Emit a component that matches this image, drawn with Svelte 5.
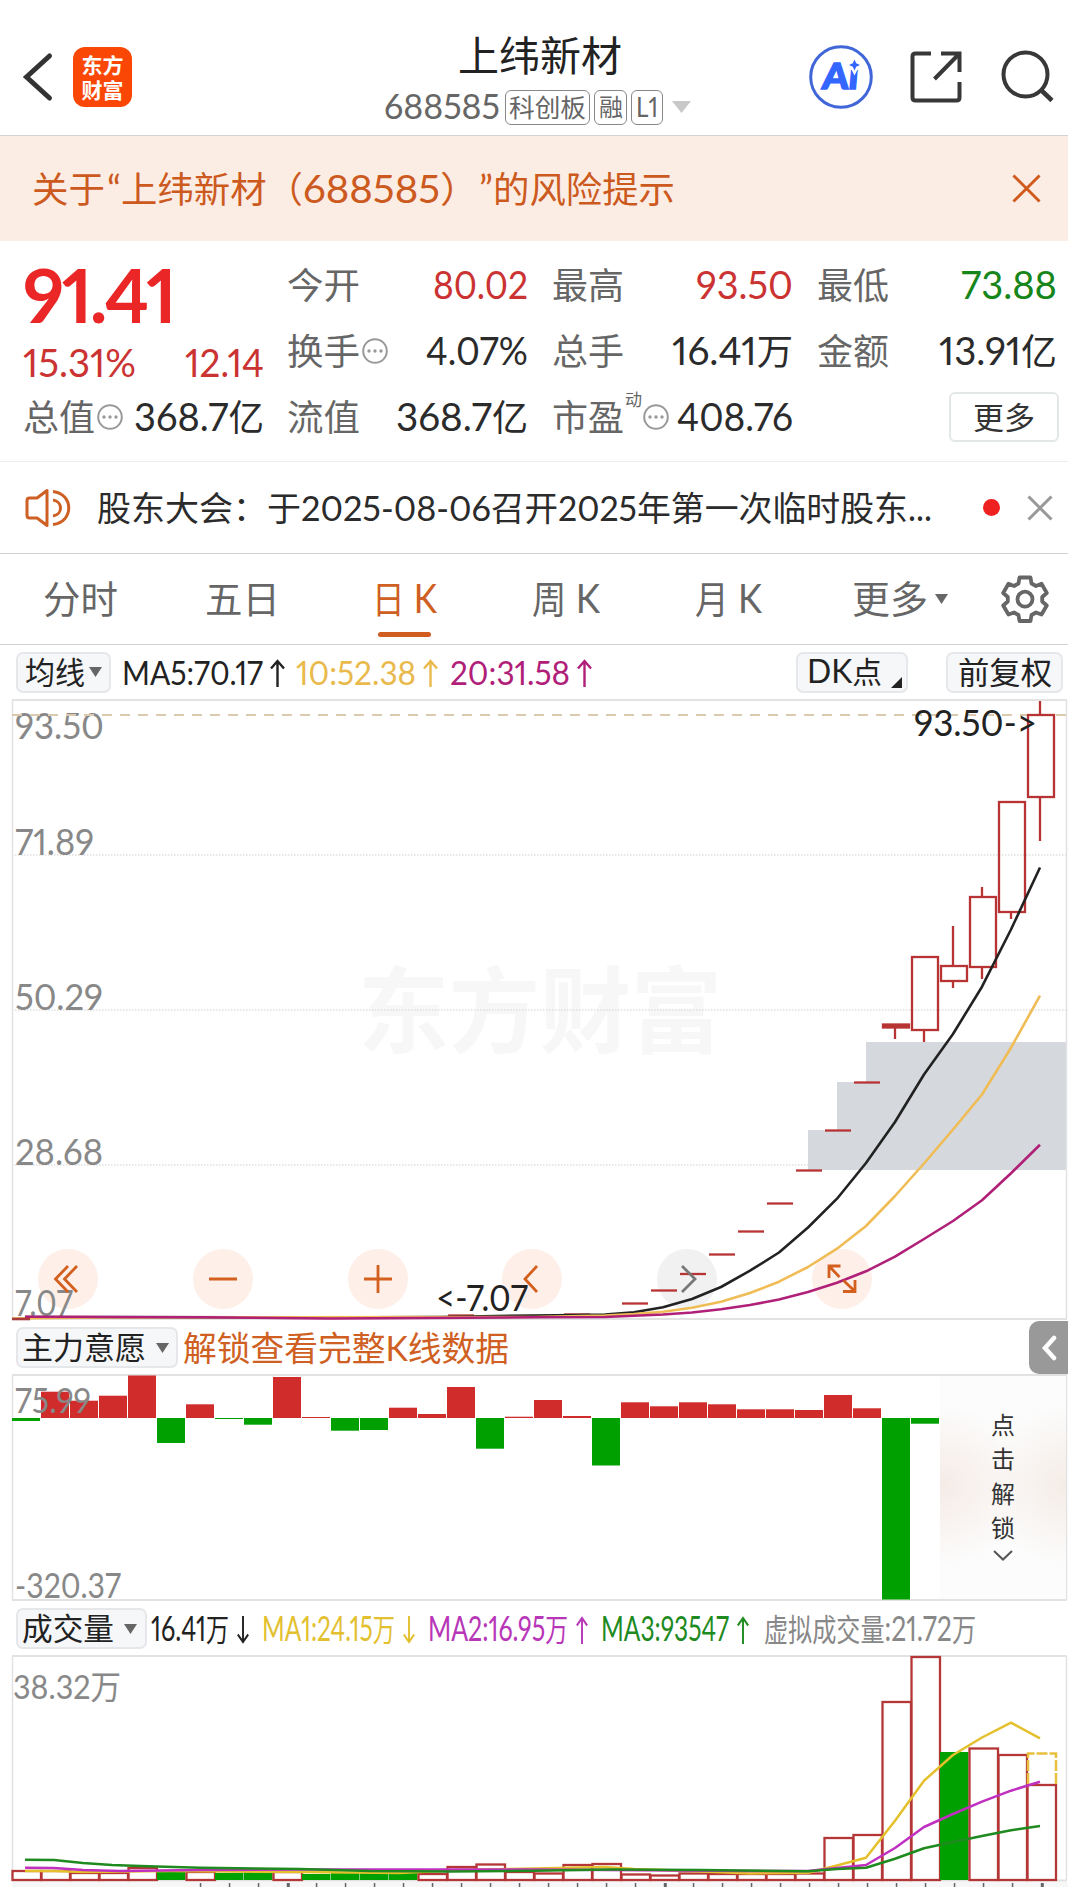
<script>
  // Splits a label into latin and CJK runs so that each gets its own face and size.
  const runs = (s) => s.match(/[\x20-\x7e“”]+|[^\x20-\x7e“”]+/g) ?? [];
  const isLatin = (s) => /^[\x20-\x7e“”]/.test(s);

  const tabs = [
    { t: '分时', w: 75 },
    { t: '五日', w: 75 },
    { t: '日 K', w: 65, on: true },
    { t: '周 K', w: 68 },
    { t: '月 K', w: 67 }
  ];

  // ---- price chart ----
  const cx = (i) => 25 + 29 * i;
  const candles = [
    { i: 30, top: 1024.5, bot: 1027.5, hi: 1024, lo: 1039, solid: true },
    { i: 31, top: 957, bot: 1030, hi: 957, lo: 1042 },
    { i: 32, top: 966, bot: 981, hi: 926, lo: 988 },
    { i: 33, top: 897, bot: 967, hi: 887, lo: 979 },
    { i: 34, top: 802, bot: 912, hi: 802, lo: 919 },
    { i: 35, top: 715, bot: 797, hi: 701, lo: 841 }
  ];
  const dashes = [
    [21, 1303.5], [22, 1290.5], [23, 1274], [24, 1254.5], [25, 1231.5],
    [26, 1203.5], [27, 1170.5], [28, 1130.5], [29, 1082.5], [19, 1314.5], [15, 1315.5]
  ];
  const ma5 = '25,1317 300,1317.5 440,1317 534,1315.5 576,1315 605,1314.5 634,1312.3 663,1307.3 692,1299 721,1287 750,1270.7 779,1252.5 808,1227.5 837,1198.7 866,1163 895,1122 924,1074.5 953,1034 982,986.7 1011,929.5 1040,867.5';
  const ma10 = '12,1318.5 100,1317.5 534,1317 605,1315.5 634,1314 663,1311.7 692,1307.7 721,1301.7 750,1293 779,1281.7 808,1267 837,1248.7 866,1226 895,1196 924,1163.5 953,1129.5 982,1094.5 1011,1047.7 1040,995.7';
  const ma20 = '25,1316.7 200,1317.2 330,1318.5 534,1317.3 605,1317 634,1315.7 663,1314.5 692,1312.5 721,1309.3 750,1305 779,1299.5 808,1292 837,1282.7 866,1271.3 895,1256.7 924,1239 953,1221 982,1200.3 1011,1173.3 1040,1144.7';
  const scale = [
    ['93.50', 15, 738.5, 89], ['71.89', 15, 855, 79], ['50.29', 15, 1010, 88],
    ['28.68', 15, 1164.5, 88], ['7.07', 15, 1316, 58]
  ];

  // ---- main force bars, in pixels above (+) or below (-) zero ----
  const force = [-3, 26.3, 17.3, 22.3, 42.5, -25, 13.7, -1, -6.7, 41, 1, -12.7, -12, 10.3, 4, 31, -30.7, 1.3,
    18, 2, -47.5, 15.7, 11.7, 15.7, 13.7, 8.7, 8.7, 8, 23, 9.7, -181.5, -5.7];

  // ---- volume ----
  const vol = [1871, 1871, 1873, 1873, 1868, 1872, 1872, 1873, 1872, 1872, 1874, 1873, 1873, 1873, 1874, 1867, 1864.5, 1872,
    1873.5, 1865, 1864, 1874.5, 1875.5, 1873.5, 1874, 1874, 1874, 1873.5, 1838, 1835, 1702, 1657, 1752, 1748.5, 1755, 1785];
  const volGreen = [5, 7, 8, 10, 11, 12, 13, 32];
  const v1 = '25,1871 54,1871 83,1872 170,1871 300,1872 400,1873 460,1870 534,1868.5 605,1867 634,1869 692,1871 750,1873.5 808,1872.7 837,1865.5 866,1857.7 895,1820.7 924,1780.7 953,1755 982,1737.5 1011,1722.7 1040,1738.3';
  const v2 = '25,1867.7 54,1868 83,1870 120,1871 200,1870 300,1869.5 534,1869.5 750,1871 808,1871 837,1868 866,1865 895,1848 924,1827 953,1814 982,1801.7 1011,1790.7 1040,1781.7';
  const v3 = '25,1859.7 54,1860 83,1863 112,1865 140,1866 200,1867.7 300,1869 370,1871 450,1871.5 534,1870.7 610,1869.5 700,1870 808,1871.3 837,1869 866,1867.7 895,1858.7 924,1848.3 953,1842 982,1836 1011,1830.3 1040,1826';
  const ticks = Array.from({ length: 30 }, (_, k) => 200.5 + 29 * k);
</script>

{#snippet fit(text, w, size, cls = '', k = 1.07, adjust = 'spacingAndGlyphs')}
  <svg class="fit {cls}" width={w} height={size} viewBox="0 0 {w} {size}">
    <text x="0" y={size * 0.875} font-size={size} textLength={w} lengthAdjust={adjust}
      >{#each runs(text) as r}<tspan font-size={isLatin(r) ? size * k : size}>{r}</tspan>{/each}</text>
  </svg>
{/snippet}

{#snippet dots()}
  <svg class="dots" width="26" height="26" viewBox="0 0 26 26">
    <circle cx="13" cy="13" r="11.8" fill="none" stroke="#999" stroke-width="2" />
    <circle cx="7" cy="13" r="1.7" fill="#999" /><circle cx="13" cy="13" r="1.7" fill="#999" /><circle cx="19" cy="13" r="1.7" fill="#999" />
  </svg>
{/snippet}

{#snippet arrow(dir, w = 15)}
  <svg class="fit arr" class:down={dir === 'down'} width={w} height="28" viewBox="0 0 15 28" preserveAspectRatio="none">
    <path d="M7.5 28V2M1 9.5 7.5 2 14 9.5" fill="none" stroke="currentColor" stroke-width="2.4" />
  </svg>
{/snippet}

{#snippet tri(w = 13, h = 10)}
  <svg class="fit tri" width={w} height={h} viewBox="0 0 13 10" preserveAspectRatio="none"><path d="M0 0h13L6.5 10z" fill="#666" /></svg>
{/snippet}

<div class="page">
  <header>
    <svg class="back" width="32" height="52" viewBox="0 0 32 52"><path d="M27.500 5 4.500 26 27.500 47" fill="none" stroke="#333" stroke-width="5" stroke-linecap="round" /></svg>
    <div class="logo"><span>东方</span><span>财富</span></div>
    <div class="title">
      {@render fit('上纬新材', 164, 41, 'name')}
      <div class="sub">
        {@render fit('688585', 116, 32)}
        <span class="tag">{@render fit('科创板', 77, 25)}</span>
        <span class="tag t2">{@render fit('融', 24, 24)}</span>
        <span class="tag t3">{@render fit('L1', 22, 26)}</span>
        <svg class="caret" width="19" height="12" viewBox="0 0 19 12"><path d="M0 0h19L9.500 12z" fill="#c8c8c8" /></svg>
      </div>
    </div>
    <div class="tools">
      <svg width="64" height="64" viewBox="0 0 64 64">
        <circle cx="32" cy="32" r="30.3" fill="none" stroke="#4066d8" stroke-width="3" />
        <text class="ai" x="0" y="0" font-size="36" textLength="36" lengthAdjust="spacingAndGlyphs" transform="translate(12.500 44) skewX(-5)">Ai</text>
        <path d="M45.500 14 47.500 18 51.500 20 47.500 22 45.500 26 43.500 22 39.500 20 43.500 18z" fill="#fff" stroke="#fff" stroke-width="4" />
        <path d="M45.500 14.500 47.200 18.200 51 20 47.200 21.800 45.500 25.500 43.800 21.800 40 20 43.800 18.200z" fill="#3366ff" />
      </svg>
      <svg width="52" height="52" viewBox="0 0 52 52" fill="none" stroke="#383838" stroke-width="4">
        <path d="M21 2.500H5.500Q2.500 2.500 2.500 5.500V46.500Q2.500 49.500 5.500 49.500H46.500Q49.500 49.500 49.500 46.500V31M31 2.500H49.500V21M49 3 24.500 28" />
      </svg>
      <svg width="54" height="54" viewBox="0 0 54 54" fill="none" stroke="#383838" stroke-width="4">
        <circle cx="25.500" cy="25.500" r="22" /><path d="M41 41 52 51.500" stroke-width="4.500" />
      </svg>
    </div>
  </header>

  <div class="risk">
    {@render fit('关于', 73, 36)}
    {@render fit('“', 14, 36, 'q')}
    {@render fit('上纬新材（', 182, 36)}
    {@render fit('688585', 137, 36)}
    {@render fit('）', 39, 36)}
    {@render fit('”', 14, 36, 'q')}
    {@render fit('的风险提示', 182, 36)}
    <svg class="x" width="29" height="29" viewBox="0 0 30 30"><path d="M1.500 1.500 28.500 28.500M28.500 1.500 1.500 28.500" stroke="#d2591c" stroke-width="3" /></svg>
  </div>

  <section class="quote">
    <div class="c1">
      <div class="price">{@render fit('91.41', 154, 71, 'big', 1.05, 'spacing')}</div>
      <div class="row chg red">{@render fit('15.31%', 113, 36)}{@render fit('12.14', 79, 36)}</div>
      <div class="row"><span class="lab">{@render fit('总值', 72, 36)}{@render dots()}</span>{@render fit('368.7亿', 130, 36)}</div>
    </div>
    <div class="col c2">
      <div class="row"><span class="lab">{@render fit('今开', 73, 36)}</span><span class="red">{@render fit('80.02', 95, 36)}</span></div>
      <div class="row"><span class="lab">{@render fit('换手', 73, 36)}{@render dots()}</span>{@render fit('4.07%', 102, 36)}</div>
      <div class="row"><span class="lab">{@render fit('流值', 73, 36)}</span>{@render fit('368.7亿', 132, 36)}</div>
    </div>
    <div class="col c3">
      <div class="row"><span class="lab">{@render fit('最高', 72, 36)}</span><span class="red">{@render fit('93.50', 97, 36)}</span></div>
      <div class="row"><span class="lab">{@render fit('总手', 72, 36)}</span>{@render fit('16.41万', 121, 36)}</div>
      <div class="row"><span class="lab">{@render fit('市盈', 72, 36)}<sup>动</sup>{@render dots()}</span>{@render fit('408.76', 116, 36)}</div>
    </div>
    <div class="col c4">
      <div class="row"><span class="lab">{@render fit('最低', 72, 36)}</span><span class="green">{@render fit('73.88', 96, 36)}</span></div>
      <div class="row"><span class="lab">{@render fit('金额', 72, 36)}</span>{@render fit('13.91亿', 118, 36)}</div>
      <div class="row end"><button>{@render fit('更多', 62, 31)}</button></div>
    </div>
  </section>

  <div class="notice">
    <svg class="horn" width="46" height="40" viewBox="0 0 46 40" fill="none" stroke="#cf6024" stroke-width="3" stroke-linejoin="round">
      <path d="M22 2.500V37.500L12 30H4.500Q2 30 2 27.500V12.500Q2 10 4.500 10H12z" />
      <path d="M28 3.500C49 6 49 34 28 36.500M28 12C38 13.500 38 26.500 28 28" />
    </svg>
    {@render fit('股东大会：于', 204, 34)}
    {@render fit('2025-08-06', 190, 34, '', 1.04)}
    {@render fit('召开', 67, 34)}
    {@render fit('2025', 79, 34, '', 1.04)}
    {@render fit('年第一次临时股东', 271, 34)}
    {@render fit('...', 24, 34)}
    <i class="dot"></i>
    <svg class="x2" width="26" height="26" viewBox="0 0 26 26"><path d="M1.500 1.500 24.500 24.500M24.500 1.500 1.500 24.500" stroke="#999" stroke-width="3" /></svg>
  </div>

  <nav>
    {#each tabs as t}
      <div class="tab" class:on={t.on}>{@render fit(t.t, t.w, 38)}</div>
    {/each}
    <div class="tab more">{@render fit('更多', 76, 38)}{@render tri(13, 10)}</div>
    <svg class="gear" width="48" height="48" viewBox="0 0 48 48" fill="none" stroke="#666" stroke-width="3.800" stroke-linejoin="round">
      <path d="M18.500 2.500H29.500L30.500 8.500L35 11L40.500 8.800L45.800 18L41.200 22V26.500L45.800 30.500L40.500 39.500L35 37.500L30.500 40L29.500 46H18.500L17.500 40L13 37.500L7.500 39.500L2.200 30.500L6.800 26.500V22L2.200 18L7.500 8.800L13 11L17.500 8.500z" />
      <circle cx="24" cy="24.200" r="7.500" />
    </svg>
  </nav>

  <div class="legend ma">
    <span class="btn b1">{@render fit('均线', 60, 30.5)}{@render tri()}</span>
    <span class="v m5">{@render fit('MA5:70.17', 141, 31)}{@render arrow('up')}</span>
    <span class="v m10">{@render fit('10:52.38', 120, 31)}{@render arrow('up')}</span>
    <span class="v m20">{@render fit('20:31.58', 120, 31)}{@render arrow('up')}</span>
    <span class="btn b2">{@render fit('DK点', 75, 30)}<svg class="fit" width="11" height="11" viewBox="0 0 11 11"><path d="M11 0V11H0z" fill="#222" /></svg></span>
    <span class="btn b3">{@render fit('前复权', 94, 31)}</span>
  </div>

  <svg class="chart" width="1068" height="622" viewBox="0 699 1068 622">
    <text class="wm" x="358" y="1046" font-size="94" textLength="364" lengthAdjust="spacingAndGlyphs">东方财富</text>
    <g stroke="#dedede" stroke-width="1.500" stroke-dasharray="1.500 1.500">
      <path d="M12 855H1066M12 1010H1066M12 1165H1066" />
    </g>
    <path d="M866 1042H1066V1170H808V1130H837V1082H866z" fill="#d5d8dc" />
    <path d="M12.500 700V1319M1066.500 700V1319" stroke="#e2e2e2" stroke-width="1.500" />
    <path d="M12 700H1067M12 1319H1067" stroke="#e2e2e2" stroke-width="2" />
    {#each [68, 223, 378, 532, 687, 842] as x}
      <circle cx={x} cy="1279" r="30" fill={x === 687 ? '#f1f1f1' : '#feefe8'} />
    {/each}
    {#each scale as [t, x, y, w]}
      <text class="axis" {x} {y} font-size="36" textLength={w} lengthAdjust="spacingAndGlyphs">{t}</text>
    {/each}
    <path d="M12 715H1066" stroke="#dccaae" stroke-width="2" stroke-dasharray="10 8" />
    <g stroke="#b83434" fill="none" stroke-width="2.300">
      {#each candles as c}
        <path d="M{cx(c.i)} {c.hi}V{c.top}M{cx(c.i)} {c.bot}V{c.lo}" />
        <rect x={cx(c.i) - 12} y={c.top} width="26" height={c.bot - c.top} fill={c.solid ? '#b83434' : 'none'} />
      {/each}
      {#each dashes as [i, y]}
        <path d="M{cx(i) - 12} {y}h26" />
      {/each}
    </g>
    <g fill="none" stroke-width="2.600" stroke-linejoin="round">
      <polyline points={ma5} stroke="#222" />
      <polyline points={ma10} stroke="#f0bc55" />
      <polyline points={ma20} stroke="#b02078" />
      <path d="M12 1319H30" stroke="#a83a3a" />
    </g>
    <text class="ink" x="914" y="736" font-size="36" textLength="123" lengthAdjust="spacingAndGlyphs">93.50-&gt;</text>
    <text class="ink" x="436" y="1311" font-size="36" textLength="92" lengthAdjust="spacingAndGlyphs">&lt;-7.07</text>
    <g fill="none" stroke="#d3601f" stroke-width="2.800">
      <path d="M68 1266 55.500 1279 68 1292M77 1266 64.500 1279 77 1292" />
      <path d="M209 1279H237M364 1279H392M378 1265V1293M537 1266 525 1279 537 1292" />
      <path d="M840.500 1266H829V1278M829.500 1266.500 839.500 1277M843 1291.500H855V1280M854.500 1291 843.500 1280.500" />
      <path d="M682 1266 695 1279 682 1292" stroke="#777" />
    </g>
  </svg>

  <div class="legend force">
    <span class="btn b4">{@render fit('主力意愿', 124, 31)}{@render tri()}</span>
    <span class="orange">{@render fit('解锁查看完整K线数据', 326, 34, '', 1)}</span>
    <span class="handle"><svg width="16" height="26" viewBox="0 0 16 26"><path d="M13 3 4 13 13 23" fill="none" stroke="#fff" stroke-width="4.500" stroke-linecap="round" /></svg></span>
  </div>

  <div class="lower">
    <svg class="chart" width="1068" height="228" viewBox="0 1374 1068 228">
      <path d="M12.500 1375V1600M1066.500 1375V1600" stroke="#e2e2e2" stroke-width="1.500" />
      <path d="M12 1375H1067M12 1600H1067" stroke="#e2e2e2" stroke-width="2" />
      {#each force as v, i}
        <rect x={12 + 29 * i} y={v > 0 ? 1418 - v : 1418} width="28" height={Math.abs(v)} fill={v > 0 ? '#d02c2c' : '#00a000'} />
      {/each}
      <text class="axis" x="15" y="1413" font-size="34" textLength="76" lengthAdjust="spacingAndGlyphs">75.99</text>
      <text class="axis" x="15" y="1598" font-size="34" textLength="106" lengthAdjust="spacingAndGlyphs">-320.37</text>
    </svg>
    <div class="lock">
      <span>点</span><span>击</span><span>解</span><span>锁</span>
      <svg width="20" height="11" viewBox="0 0 20 11"><path d="M1 1 10 9.500 19 1" fill="none" stroke="#555" stroke-width="2" /></svg>
    </div>
  </div>

  <div class="legend volume">
    <span class="btn b5">{@render fit('成交量', 92, 31)}{@render tri()}</span>
    <span class="v w0">{@render fit('16.41万', 78, 31, '', 1.1)}{@render arrow('down', 12)}</span>
    <span class="v w1">{@render fit('MA1:24.15万', 133, 31, '', 1.1)}{@render arrow('down', 12)}</span>
    <span class="v w2">{@render fit('MA2:16.95万', 140, 31, '', 1.1)}{@render arrow('up', 12)}</span>
    <span class="v w3">{@render fit('MA3:93547', 128, 31, '', 1.1)}{@render arrow('up', 12)}</span>
    <span class="v w4">{@render fit('虚拟成交量:21.72万', 212, 31, '', 1.1)}</span>
  </div>

  <svg class="chart" width="1068" height="232" viewBox="0 1655 1068 232">
    <rect x="12" y="1882" width="1056" height="5" fill="#f7f7f7" />
    <path d="M12.500 1656V1880M1066.500 1656V1880" stroke="#e2e2e2" stroke-width="1.500" />
    <path d="M12 1656H1067M12 1880.500H1067" stroke="#e2e2e2" stroke-width="2" />
    <text class="axis" x="13" y="1699" font-size="33" textLength="108" lengthAdjust="spacingAndGlyphs">38.32万</text>
    {#each vol as y, i}
      {#if volGreen.includes(i)}
        <rect x={12 + 29 * i} {y} width="28.500" height={1880 - y} fill="#00a000" />
      {:else}
        <rect x={12.5 + 29 * i} y={y} width="28.500" height={1880 - y} fill="none" stroke="#b53636" stroke-width="2.300" />
      {/if}
    {/each}
    <path d="M1028 1784V1753.500H1056V1784" fill="none" stroke="#e8c040" stroke-width="2.500" stroke-dasharray="11 2" />
    <g fill="none" stroke-width="2.500" stroke-linejoin="round">
      <polyline points={v1} stroke="#e3c02c" />
      <polyline points={v2} stroke="#c030c0" />
      <polyline points={v3} stroke="#1f8a1f" />
    </g>
    {#each ticks as x, k}
      <rect x={x - 0.7} y="1883" width={k % 13 === 3 ? 3 : 1.5} height="4" fill="#666" />
    {/each}
  </svg>
</div>

<style>
  :global(body) { background: #fff; }
  .page {
    width: 1068px; height: 1887px; overflow: hidden; background: #fff; color: #2b2b2b;
    font-family: Lato, "Noto Sans CJK SC", sans-serif; display: flex; flex-direction: column;
  }
  svg { display: block; flex: none; }
  text { fill: currentColor; font-feature-settings: "pnum"; font-family: Lato, "Noto Sans CJK SC", sans-serif; }
  .fit { overflow: visible; }
  .red { color: #cb3232; }
  .green { color: #16861a; }

  header { height: 135px; border-bottom: 1px solid #d2d2d2; box-sizing: content-box; display: flex; flex: none; }
  .back { margin: 51px 0 0 22px; }
  .logo {
    width: 59px; height: 60px; margin: 47px 0 0 19px; border-radius: 12px; background: #fb4706; color: #fff; flex: none;
    display: flex; flex-direction: column; align-items: center; justify-content: center;
  }
  .logo span { font: 700 21px/25px "Noto Sans CJK SC", sans-serif; }
  .title { width: 320px; margin: 35px 0 0 252px; flex: none; }
  .title > :global(.name) { margin-left: 74px; }
  .name { color: #222; }
  .sub { display: flex; align-items: center; height: 36px; margin-top: 13px; color: #666; }
  .tag { display: flex; align-items: center; justify-content: center; width: 85px; height: 35px; border: 1.5px solid #888; border-radius: 6px; margin-left: 5px; box-sizing: border-box; flex: none; }
  .t2 { width: 33px; margin-left: 4px; }
  .t3 { width: 32px; margin-left: 4px; }
  .caret { margin-left: 9px; }
  .tools { display: flex; margin: 45px 0 0 105px; }
  .tools svg:nth-child(2) { margin: 6px 0 0 37px; }
  .tools svg:nth-child(3) { margin: 4px 0 0 38px; }
  .ai { fill: #3366ff; font-weight: 900; stroke: #3366ff; stroke-width: 1.5px; }

  .risk { height: 105px; flex: none; background: #fcede4; display: flex; align-items: center; padding-left: 32px; color: #cc5a1e; }
  .risk > svg:nth-child(2) { margin-left: 2px; }
  .risk > .x { margin-left: 337px; }

  .quote { height: 221px; flex: none; border-bottom: 1px solid #ececec; box-sizing: border-box; display: flex; padding-top: 11px; }
  .c1 { width: 241px; margin-left: 23px; }
  .price { height: 83px; padding-top: 9px; box-sizing: border-box; color: #ea2626; }
  .big { font-weight: 700; }
  .row { height: 66px; display: flex; align-items: center; justify-content: space-between; }
  .c1 .chg { height: 49px; padding-top: 6px; box-sizing: border-box; }
  .row.end { justify-content: flex-end; }
  .lab { color: #666; display: flex; align-items: center; position: relative; }
  .dots { margin-left: 2px; margin-top: -1px; }
  sup { font-size: 17px; line-height: 17px; align-self: flex-start; margin: -8px 0 0 1px; }
  sup + .dots { margin-left: 1px; }
  .c2 { width: 241px; margin-left: 23px; }
  .c3 { width: 241px; margin-left: 24px; }
  .c4 { width: 240px; margin-left: 24px; }
  button {
    width: 110px; height: 50px; border: 2px solid #e4e7e8; border-radius: 6px; background: #fff; color: #333; padding: 0;
    display: flex; align-items: center; justify-content: center; margin-right: -2px;
  }

  .notice { height: 92px; flex: none; border-bottom: 1px solid #d2d2d2; box-sizing: border-box; display: flex; align-items: center; padding-left: 25px; }
  .horn { margin-right: 26px; }
  .dot { width: 17px; height: 17px; border-radius: 50%; background: #ee2020; margin-left: 51px; }
  .x2 { margin-left: 27px; }

  nav { height: 91px; flex: none; border-bottom: 1px solid #d2d2d2; box-sizing: border-box; display: flex; align-items: center; color: #666; }
  .tab { width: 162px; height: 90px; display: flex; align-items: center; justify-content: center; position: relative; flex: none; }
  .tab:first-child { width: 161px; }
  .tab.on { color: #cf5f22; }
  .tab.on::after { content: ""; position: absolute; bottom: 7px; left: 55px; width: 53px; height: 5px; border-radius: 3px; background: #d05c20; }
  .more { width: 181px; gap: 7px; }
  .gear { margin-left: 11px; margin-top: -1px; }

  .legend { height: 54px; flex: none; display: flex; align-items: center; color: #222; }
  .btn { display: flex; align-items: center; box-sizing: border-box; height: 41px; border: 2px solid #e5e7ea; border-radius: 7px; background: #f6f7f9; flex: none; }
  .b1 { width: 95px; margin-left: 16px; padding-left: 7px; gap: 4px; }
  .v { display: flex; align-items: center; gap: 7px; flex: none; margin-top: 2px; }
  .down { transform: rotate(180deg); }
  .m5 { margin-left: 11px; }
  .m10 { margin-left: 11px; color: #e9b94c; }
  .m20 { margin-left: 12px; color: #b02078; }
  .b2 { width: 112px; margin-left: 204px; padding-left: 9px; gap: 9px; }
  .b2 > svg:last-child { margin-top: 20px; }
  .b3 { width: 117px; margin-left: 38px; justify-content: center; }
  .wm { fill: #f7f7f7; font-weight: 700; }
  .axis { fill: #888; }
  .ink { fill: #222; }

  .force { height: 53px; }
  .b4 { width: 162px; margin-left: 16px; padding-left: 4px; gap: 10px; }
  .orange { color: #cf5f22; margin-left: 5px; }
  .handle { margin-left: auto; width: 39px; height: 53px; border-radius: 10px 0 0 10px; background: #999; display: flex; align-items: center; padding-left: 12px; box-sizing: border-box; }

  .lower { position: relative; height: 228px; flex: none; }
  .lock {
    position: absolute; left: 940px; top: 2px; width: 126px; height: 223px; box-sizing: border-box; padding-top: 32px;
    display: flex; flex-direction: column; align-items: center; color: #333;
    background:
      radial-gradient(ellipse 90px 80px at 0 49%, #f5ebe6, transparent),
      radial-gradient(ellipse 80px 80px at 100% 49%, #f4ece6, transparent),
      #fcfcfc;
  }
  .lock span { font-size: 24px; line-height: 34.4px; }
  .lock svg { margin-top: 4px; }

  .volume { height: 53px; }
  .b5 { width: 131px; margin-left: 16px; padding-left: 4px; gap: 10px; }
  .w0 { margin-left: 4px; gap: 8px; }
  .w1 { margin-left: 13px; gap: 8px; color: #e3c030; }
  .w2 { margin-left: 13px; gap: 8px; color: #b836b8; }
  .w3 { margin-left: 13px; gap: 8px; color: #1f8a1f; }
  .w4 { margin-left: 15px; color: #888; }
</style>
